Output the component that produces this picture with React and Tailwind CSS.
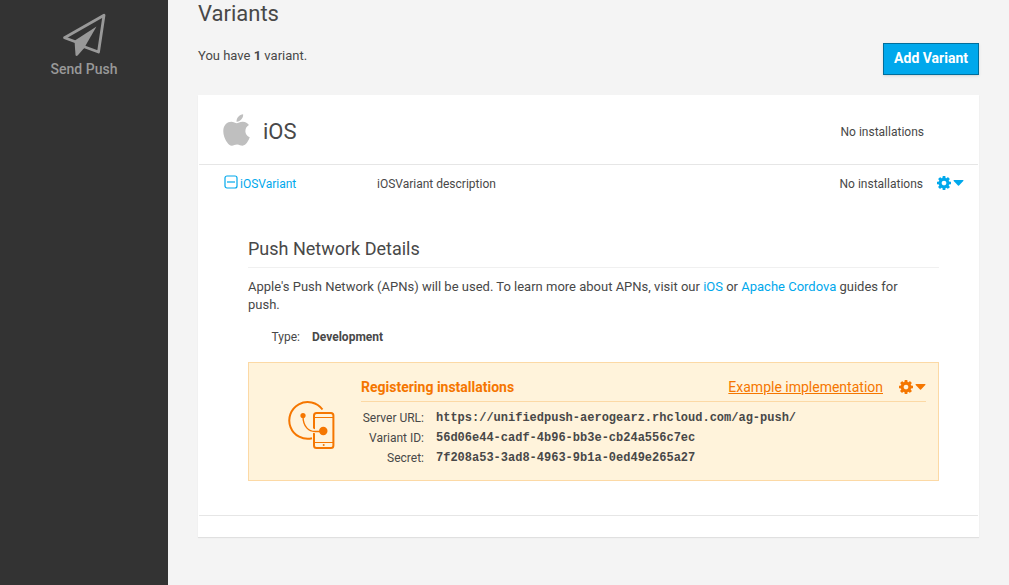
import React, { useState } from "react";
import { FaApple } from "react-icons/fa";

function SendIcon() {
  return (
    <svg viewBox="0 0 44 44" className="h-11 w-11" aria-hidden="true">
      <path
        d="M14 29 L2.5 24.8 L42 2.2 L36.5 39 L21.5 33.5"
        fill="none"
        stroke="currentColor"
        strokeWidth="2.8"
        strokeLinejoin="round"
      />
      <path d="M34.5 13.5 L12.5 27.8 L13.5 42 Q14 43.6 15.6 42.6 L22 35.2 Z" fill="currentColor" />
    </svg>
  );
}

function RegisterIcon() {
  return (
    <svg viewBox="0 0 48 50" className="h-[50px] w-12 text-[#f57600]" fill="none" stroke="currentColor" aria-hidden="true">
      <path d="M34.5 9.5 A18.4 18.4 0 1 0 24 38.3" strokeWidth="2" />
      <rect x="26" y="13" width="19.4" height="35" rx="2.5" strokeWidth="2" />
      <path d="M26 17.5 H45 M26 42.5 H45" strokeWidth="1" />
      <path d="M20 26 C22 29.5 25 31.5 29 31.5" stroke="#fff3db" strokeWidth="4" />
      <path d="M15 16 C15 27 21 31.5 27 31.5 H34" strokeWidth="1.4" />
      <circle cx="15" cy="15.5" r="2.6" fill="currentColor" stroke="none" />
      <circle cx="35.3" cy="31" r="4.2" fill="currentColor" stroke="none" />
      <circle cx="35.7" cy="45" r="1" fill="currentColor" stroke="none" />
    </svg>
  );
}

function GearIcon() {
  return (
    <svg viewBox="128 128 1536 1536" className="h-3.5 w-3.5" fill="currentColor" aria-hidden="true">
      <path d="M1152 896q0-106-75-181t-181-75-181 75-75 181 75 181 181 75 181-75 75-181zm512-109v222q0 12-8 23t-20 13l-185 28q-19 54-39 91 35 50 107 138 10 12 10 25t-9 23q-27 37-99 108t-94 71q-12 0-26-9l-138-108q-44 23-91 38-16 136-29 186-7 28-36 28h-222q-14 0-24.5-8.5t-11.5-21.5l-28-184q-49-16-90-37l-141 107q-10 9-25 9-14 0-25-11-126-114-165-168-7-10-7-23 0-12 8-23 15-21 51-66.500t54-70.500q-27-50-41-99l-183-27q-13-2-21-12.500t-8-23.500v-222q0-12 8-23t19-13l186-28q14-46 39-92-40-57-107-138-10-12-10-24 0-10 9-23 26-36 98.500-107.500t94.500-71.500q13 0 26 10l138 107q44-23 91-38 16-136 29-186 7-28 36-28h222q14 0 24.500 8.500t11.500 21.500l28 184q49 16 90 37l142-107q9-9 24-9 13 0 25 10 129 119 165 170 7 8 7 22 0 12-8 23-15 21-51 66.500t-54 70.500q26 50 41 98l183 28q13 2 21 12.500t8 23.500z" />
    </svg>
  );
}

function ToggleIcon({ open }) {
  return (
    <svg viewBox="0 0 14 14" className="h-3.5 w-3.5" fill="none" stroke="currentColor" aria-hidden="true">
      <rect x="1" y="1" width="12" height="12" rx="2" strokeWidth="1.2" />
      <path d={open ? "M3 7 H11" : "M3 7 H11 M7 3 V11"} strokeWidth="1.2" />
    </svg>
  );
}

function ActionsButton({ label }) {
  return (
    <button type="button" aria-label={label} className="flex items-center gap-0.5">
      <GearIcon />
      <svg viewBox="0 0 11 6" className="h-1.5 w-[11px]" fill="currentColor" aria-hidden="true">
        <path d="M1 0 H10 Q10.900 0.200 10.300 1 L6 5.500 Q5.500 5.900 5 5.500 L0.700 1 Q0.100 0.200 1 0 Z" />
      </svg>
    </button>
  );
}

const registration = [
  ["Server URL:", "https://unifiedpush-aerogearz.rhcloud.com/ag-push/"],
  ["Variant ID:", "56d06e44-cadf-4b96-bb3e-cb24a556c7ec"],
  ["Secret:", "7f208a53-3ad8-4963-9b1a-0ed49e265a27"],
];

function Registration() {
  return (
    <section className="mt-[15px] flex items-center border border-[#fcd9a5] bg-[#fff3db] pt-3.5 pr-3 pb-3">
      <div className="flex w-28 shrink-0 justify-center pt-1 pl-3.5">
        <RegisterIcon />
      </div>
      <div className="min-w-0 flex-1">
        <div className="flex h-[25px] items-center border-b border-[#fcd9a5] pb-1 text-[#f57600]">
          <h4 className="flex-1 text-sm font-bold">Registering installations</h4>
          <a href="#example" className="mr-4 text-sm underline">Example implementation</a>
          <ActionsButton label="Registration actions" />
        </div>
        <dl className="mt-1.5 text-xs leading-5">
          {registration.map(([name, value]) => (
            <div key={name} className="flex gap-3">
              <dt className="w-[63px] shrink-0 text-right whitespace-nowrap">{name}</dt>
              <dd className="min-w-0 font-['Liberation_Mono',monospace] font-bold break-words">{value}</dd>
            </div>
          ))}
        </dl>
      </div>
    </section>
  );
}

export default function App() {
  const [open, setOpen] = useState(true);
  return (
    <div className="flex min-h-screen bg-[#f4f4f4] font-[Roboto,sans-serif] text-[13px] leading-[18px] text-[#484848]">
      <nav className="w-42 shrink-0 bg-[#333333] pt-[13px]">
        <a href="#send" className="flex flex-col items-center gap-0.5 text-sm font-medium text-[#999999]">
          <SendIcon />
          Send Push
        </a>
      </nav>
      <main className="min-w-0 flex-1 px-[30px]">
        <h1 className="pt-0.5 text-[22px] leading-6">Variants</h1>
        <div className="mt-[17px] flex justify-between">
          <p className="pt-1">You have <b>1</b> variant.</p>
          <button type="button" className="h-8 border border-[#006e9c] bg-[#00a8ec] px-2.5 pb-0.5 text-sm font-bold text-white shadow-sm">
            Add Variant
          </button>
        </div>
        <section className="mt-5 bg-white px-px pb-[21px] shadow-[0_1px_1px_rgba(0,0,0,0.08)]">
          <header className="flex h-[70px] items-center border-b border-[#e6e6e6] pt-1 pr-[54px] pl-[23px]">
            <FaApple className="mr-3 mb-1 h-9 w-[29px] text-[#bfbfbf]" />
            <h2 className="flex-1 text-[22px] leading-6">iOS</h2>
            <span className="text-xs">No installations</span>
          </header>
          <div className="border-b border-[#e6e6e6] pb-[34px]">
            <div className="flex h-[37px] items-center pr-[14px] pl-[25px] text-xs">
              <button
                type="button"
                aria-expanded={open}
                onClick={() => setOpen(!open)}
                className="flex w-[153px] items-center gap-0.5 text-[#00a8ec]"
              >
                <span className="pb-1">
                  <ToggleIcon open={open} />
                </span>
                iOSVariant
              </button>
              <span className="flex-1">iOSVariant description</span>
              <span className="mr-3.5">No installations</span>
              <span className="flex pb-0.5 text-[#00a8ec]">
                <ActionsButton label="Variant actions" />
              </span>
            </div>
            {open && (
              <div className="pt-9 pr-[39px] pl-[49px]">
                <h3 className="border-b border-[#f0f0f0] pb-[7px] text-lg leading-[22px]">Push Network Details</h3>
                <p className="mt-2.5 pr-4">
                  Apple's Push Network (APNs) will be used. To learn more about APNs, visit our{" "}
                  <a href="#ios" className="text-[#00a8ec]">iOS</a> or{" "}
                  <a href="#cordova" className="text-[#00a8ec]">Apache Cordova</a> guides for push.
                </p>
                <dl className="mt-[13px] flex gap-3 text-xs leading-5">
                  <dt className="w-13 text-right">Type:</dt>
                  <dd className="font-bold">Development</dd>
                </dl>
                <Registration />
              </div>
            )}
          </div>
        </section>
      </main>
    </div>
  );
}
